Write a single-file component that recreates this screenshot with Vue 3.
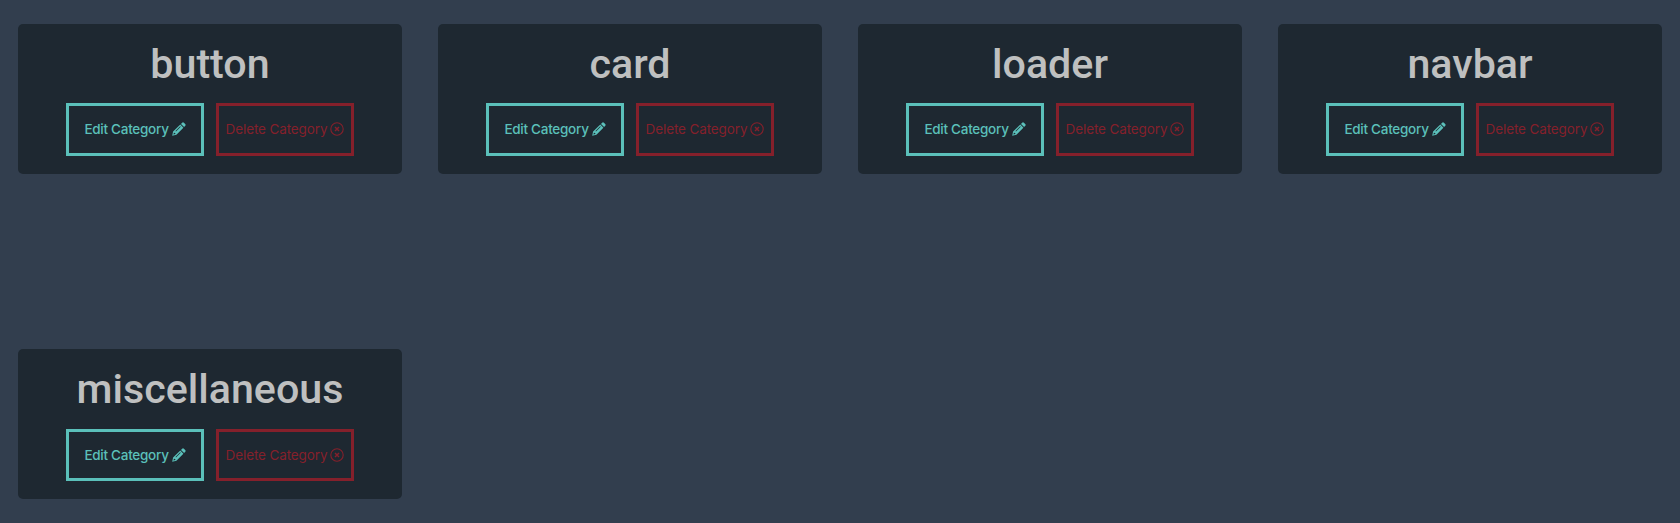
<script setup>
const categories = ['button', 'card', 'loader', 'navbar', 'miscellaneous']
</script>

<template>
  <main class="categories">
    <section v-for="name in categories" :key="name" class="card">
      <h2 class="title">{{ name }}</h2>
      <div class="actions">
        <button class="btn edit" type="button">
          <span>Edit Category</span>
          <svg viewBox="0 0 14 14" aria-hidden="true">
            <path fill="currentColor" fill-rule="evenodd" d="M10.1 0.8Q11 0 11.9.7L13.4 2.2Q14 3 13.3 3.8L12.1 5 9 1.9ZM8.3 2.6 11.4 5.7 4.4 12.8.2 13.8 1.1 9.6ZM8.2 4.3 3.5 9 4 9.5 8.7 4.8ZM1.9 10.7 1.4 12.6 3.4 12.1 3.2 10.9Z" />
          </svg>
        </button>
        <button class="btn delete" type="button">
          <span>Delete Category</span>
          <svg viewBox="0 0 14 14" aria-hidden="true">
            <circle cx="7" cy="7" r="6.2" fill="none" stroke="currentColor" stroke-width="1.1" />
            <path d="M5 5 9 9M9 5 5 9" fill="none" stroke="currentColor" stroke-width="1.5" />
          </svg>
        </button>
      </div>
    </section>
  </main>
</template>

<style>
body {
  background: #323e4e;
}
</style>

<style scoped>
.categories {
  box-sizing: border-box;
  height: 523px;
  padding: 24px 18px;
  display: grid;
  grid-template-columns: repeat(4, 384px);
  grid-auto-rows: 150px;
  gap: 175px 36px;
}
.card {
  box-sizing: border-box;
  background: #1e2831;
  border-radius: 5px;
  padding: 16px 18px 18px;
  display: flex;
  flex-direction: column;
  align-items: center;
  justify-content: space-between;
}
.title {
  margin: 0;
  font: 500 41.2px/48px Roboto, sans-serif;
  color: #bfc0c0;
}
.actions {
  display: flex;
  gap: 12px;
}
.btn {
  box-sizing: border-box;
  width: 138px;
  height: 53px;
  padding: 0 0 1px;
  border: 3px solid currentColor;
  background: transparent;
  display: flex;
  align-items: center;
  justify-content: center;
  gap: 3px;
  font: 500 13.5px/20px Inter, sans-serif;
  letter-spacing: -0.27px;
  white-space: nowrap;
}
.card:nth-child(n + 5) .btn {
  height: 52px;
  padding-bottom: 0;
}
.edit {
  color: #5bc0ba;
}
.delete {
  color: #85202b;
  font-weight: 400;
  letter-spacing: -0.12px;
}
.btn svg {
  width: 14px;
  height: 14px;
  flex: none;
}
</style>
